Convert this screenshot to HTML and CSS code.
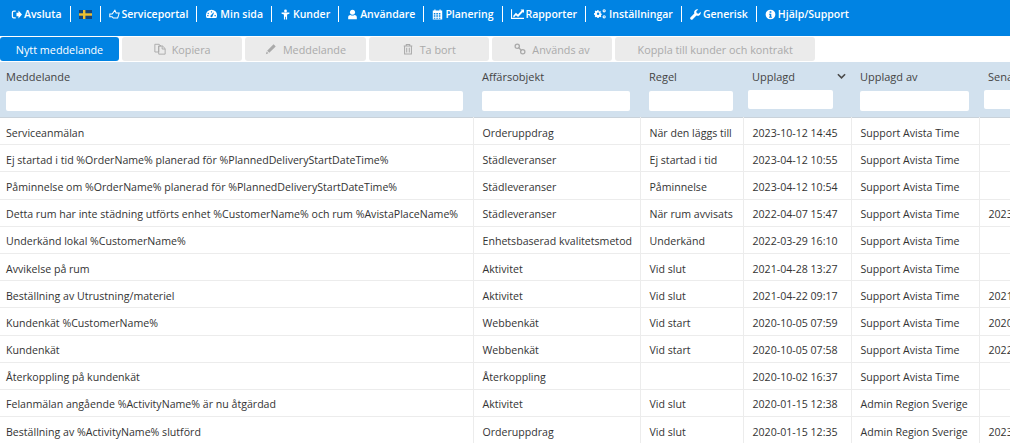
FILE: index.html
```html
<!DOCTYPE html>
<html lang="sv">

<head>
  <meta charset="UTF-8">
  <title>Meddelanden</title>
  <link rel="stylesheet" href="styles.css">
</head>

<body>

  <nav class="topnav">
    <a class="nav-item">
      <svg class="nav-icon" viewBox="0 0 14 14"><path d="M1 4.500A2.500 2.500 0 0 1 3.500 2H6v1.600H3.500a.9.900 0 0 0-.9.900v5c0 .5.400.9.900.9H6V12H3.500A2.500 2.500 0 0 1 1 9.500z"/><path d="M7 4.800h2.500V2L14 7l-4.500 5V9.200H7z"/></svg>
      Avsluta
    </a>
    <a class="nav-item">
      <svg class="flag" viewBox="0 0 13 9"><rect width="13" height="9" fill="#16457c"/><rect x="4" width="2.400" height="9" fill="#f0bf30"/><rect y="3.300" width="13" height="2.400" fill="#f0bf30"/></svg>
    </a>
    <a class="nav-item">
      <svg class="nav-icon" viewBox="0 0 14 14"><path d="M7.500 1.500 9 5h4l-1 3.500-1 3H5.500L4 10H1V6.500h3z" fill="none" stroke="#fff" stroke-width="1.300"/></svg>
      Serviceportal
    </a>
    <a class="nav-item">
      <svg class="nav-icon wide" viewBox="0 0 14 14"><path d="M7 2a6.500 6.500 0 0 0-6.500 6.500c0 1.200.3 2.300.9 3.300h11.200c.6-1 .9-2.100.9-3.300A6.500 6.500 0 0 0 7 2zM6.300 3.800h1.400v1.500H6.300zM3 5.300l1.200 1-1 1-1-1.100zM2 8.300h1.500v1.400H2zm8.500 0H12v1.400h-1.500zM7 10.800a1.300 1.300 0 0 1-.7-2.400l3-3.200.6.300-1.700 4A1.300 1.300 0 0 1 7 10.800z" fill-rule="evenodd"/></svg>
      Min sida
    </a>
    <a class="nav-item">
      <svg class="nav-icon" viewBox="0 0 14 14"><circle cx="7" cy="2.500" r="1.800"/><path d="M2 4.500h10v1.400L9 7v6.500H7.500V10h-1v3.500H5V7L2 5.900z"/></svg>
      Kunder
    </a>
    <a class="nav-item">
      <svg class="nav-icon" viewBox="0 0 14 14"><circle cx="7" cy="4.200" r="3.200"/><path d="M1.500 13v-2.500C1.500 8.500 3 7.500 4.500 7.500c.7.500 1.500.8 2.500.8s1.800-.3 2.500-.8c1.500 0 3 1 3 3V13z"/></svg>
      Användare
    </a>
    <a class="nav-item">
      <svg class="nav-icon" viewBox="0 0 14 14"><path d="M3 .5h1.500V2h5V.5H11V2h2v11.500H1V2h2zM2.300 5v2h2V5zm3.200 0v2h2V5zm3.200 0v2h2V5zM2.300 8v2h2V8zm3.200 0v2h2V8zm3.200 0v2h2V8zm-6.400 3v1.300h2V11zm3.200 0v1.300h2V11zm3.200 0v1.300h2V11z" fill-rule="evenodd"/></svg>
      Planering
    </a>
    <a class="nav-item">
      <svg class="nav-icon wide" viewBox="0 0 16 14"><path d="M0 1h1.300v10.700H16V13H0z"/><path d="M2.500 9.500 6 5.500l2.500 2L13 2.800l-1.300-1.300H16v4.200l-1.300-1.300-6 6.200L6 8.500l-2.500 2.800z"/></svg>
      Rapporter
    </a>
    <a class="nav-item">
      <svg class="nav-icon wide" viewBox="0 0 16 14"><path d="M5.500 3.500l1 .4 1-.6 1 1-.5 1 .4 1 1.100.3v1.500L8.900 8l-.4 1 .5 1-1 1-1-.5-1 .4-.3 1.100H4.200L3.900 11l-1-.4-1 .5-1-1 .5-1-.4-1L0 7.600V6.100L1 5.800l.4-1-.5-1 1-1 1 .5 1-.4L4.200 2h1.500zM5 5.300a1.500 1.500 0 1 0 0 3 1.500 1.500 0 0 0 0-3z" fill-rule="evenodd"/><path d="M12.500 1a2 2 0 1 1 0 4 2 2 0 0 1 0-4zm0 1.300a.7.700 0 1 0 0 1.400.7.700 0 0 0 0-1.400zM12.500 8.500a2 2 0 1 1 0 4 2 2 0 0 1 0-4zm0 1.300a.7.700 0 1 0 0 1.400.7.700 0 0 0 0-1.400z" fill-rule="evenodd"/></svg>
      Inställningar
    </a>
    <a class="nav-item">
      <svg class="nav-icon" viewBox="0 0 14 14"><path d="M13.500 3.500 11 6 8.500 5.500 8 3 10.500.6a4 4 0 0 0-5 5.100L.8 10.400a1.900 1.900 0 0 0 2.700 2.700l4.700-4.700a4 4 0 0 0 5.300-4.900z"/></svg>
      Generisk
    </a>
    <a class="nav-item">
      <svg class="nav-icon" viewBox="0 0 14 14"><path d="M7 .8a6.200 6.200 0 1 1 0 12.400A6.200 6.200 0 0 1 7 .8zM5.900 2.900v1.800h2.200V2.900zM5.200 6v1.300h.8v2.500h-.8V11h3.600V9.800H8V6z" fill-rule="evenodd"/></svg>
      Hjälp/Support
    </a>
  </nav>

  <div class="toolbar">
    <button class="btn btn-primary">Nytt meddelande</button>
    <button class="btn">
      <svg class="btn-icon" viewBox="0 0 14 14"><path d="M1 1.500h5l2 2H5.500v7H1zM5.500 3.500H10l3 3v6.500H5.500zM9.500 3.500v3.500H13" fill="none" stroke="#aaa" stroke-width="1.100"/></svg>
      Kopiera
    </button>
    <button class="btn">
      <svg class="btn-icon" viewBox="0 0 14 14"><path d="M10 1.500l2.500 2.500L5 11.500 2.500 9zM2 10l2 2-3 1z" fill="#aaa"/></svg>
      Meddelande
    </button>
    <button class="btn">
      <svg class="btn-icon" viewBox="0 0 14 14"><path d="M2 3.500h10M5 3.500V1.800h4v1.700M3 3.500v9.300h8V3.500M5.500 5.500v5.500M8.500 5.500v5.500" fill="none" stroke="#aaa" stroke-width="1.200"/></svg>
      Ta bort
    </button>
    <button class="btn">
      <svg class="btn-icon" viewBox="0 0 14 14"><path d="M5 5l4 4" stroke="#aaa" stroke-width="1.500"/><circle cx="3.800" cy="3.800" r="2.500" fill="none" stroke="#aaa" stroke-width="1.500"/><circle cx="10.200" cy="10.200" r="2.500" fill="none" stroke="#aaa" stroke-width="1.500"/></svg>
      Används av
    </button>
    <button class="btn btn-wide">Koppla till kunder och kontrakt</button>
  </div>

  <table class="grid">
    <colgroup>
      <col class="col-message">
      <col class="col-object">
      <col class="col-rule">
      <col class="col-created">
      <col class="col-author">
      <col>
    </colgroup>
    <thead>
      <tr>
        <th><div class="th-title">Meddelande</div><input class="filter filter-message"></th>
        <th><div class="th-title">Affärsobjekt</div><input class="filter filter-object"></th>
        <th><div class="th-title">Regel</div><input class="filter filter-rule"></th>
        <th>
          <div class="th-title">Upplagd
            <svg class="sort-icon" viewBox="0 0 10 6"><path d="M1 1l4 4 4-4" fill="none" stroke="#4a4a4a" stroke-width="1.800"/></svg>
          </div>
          <input class="filter filter-created">
        </th>
        <th><div class="th-title">Upplagd av</div><input class="filter filter-author"></th>
        <th class="th-last"><div class="th-title">Senast</div><input class="filter filter-last"></th>
      </tr>
    </thead>
    <tbody>
      <tr><td>Serviceanmälan</td><td>Orderuppdrag</td><td>När den läggs till</td><td>2023-10-12 14:45</td><td>Support Avista Time</td><td></td></tr>
      <tr><td>Ej startad i tid %OrderName% planerad för %PlannedDeliveryStartDateTime%</td><td>Städleveranser</td><td>Ej startad i tid</td><td>2023-04-12 10:55</td><td>Support Avista Time</td><td></td></tr>
      <tr><td>Påminnelse om %OrderName% planerad för %PlannedDeliveryStartDateTime%</td><td>Städleveranser</td><td>Påminnelse</td><td>2023-04-12 10:54</td><td>Support Avista Time</td><td></td></tr>
      <tr><td>Detta rum har inte städning utförts enhet %CustomerName% och rum %AvistaPlaceName%</td><td>Städleveranser</td><td>När rum avvisats</td><td>2022-04-07 15:47</td><td>Support Avista Time</td><td>2023-01-01</td></tr>
      <tr><td>Underkänd lokal %CustomerName%</td><td>Enhetsbaserad kvalitetsmetod</td><td>Underkänd</td><td>2022-03-29 16:10</td><td>Support Avista Time</td><td></td></tr>
      <tr><td>Avvikelse på rum</td><td>Aktivitet</td><td>Vid slut</td><td>2021-04-28 13:27</td><td>Support Avista Time</td><td></td></tr>
      <tr><td>Beställning av Utrustning/materiel</td><td>Aktivitet</td><td>Vid slut</td><td>2021-04-22 09:17</td><td>Support Avista Time</td><td>2021-01-01</td></tr>
      <tr><td>Kundenkät %CustomerName%</td><td>Webbenkät</td><td>Vid start</td><td>2020-10-05 07:59</td><td>Support Avista Time</td><td>2020-01-01</td></tr>
      <tr><td>Kundenkät</td><td>Webbenkät</td><td>Vid start</td><td>2020-10-05 07:58</td><td>Support Avista Time</td><td>2022-01-01</td></tr>
      <tr><td>Återkoppling på kundenkät</td><td>Återkoppling</td><td></td><td>2020-10-02 16:37</td><td>Support Avista Time</td><td></td></tr>
      <tr><td>Felanmälan angående %ActivityName% är nu åtgärdad</td><td>Aktivitet</td><td>Vid slut</td><td>2020-01-15 12:38</td><td>Admin Region Sverige</td><td></td></tr>
      <tr><td>Beställning av %ActivityName% slutförd</td><td>Orderuppdrag</td><td>Vid slut</td><td>2020-01-15 12:35</td><td>Admin Region Sverige</td><td>2023-01-01</td></tr>
    </tbody>
  </table>

</body>

</html>
```

FILE: styles.css
```css
html, body {
  height: 100%;
  overflow: hidden;
}

body {
  margin: 0;
  font-family: "Open Sans", "Noto Sans", sans-serif;
  font-size: 10.6px;
  color: #333;
  background-color: #fff;
}

.topnav {
  display: flex;
  align-items: flex-start;
  box-sizing: border-box;
  height: 36px;
  padding: 6px 0 0 11px;
  background-color: #0083e3;
}

.nav-item {
  display: flex;
  align-items: center;
  gap: 2px;
  height: 16px;
  padding-right: 8px;
  margin-right: 8px;
  border-right: 1px solid #fff;
  color: #fff;
  font-size: 10.5px;
  font-weight: 600;
  white-space: nowrap;
}

.nav-item:last-child {
  border-right: 0;
}

.nav-icon {
  width: 11px;
  height: 11px;
  fill: #fff;
}

.nav-icon.wide {
  width: 13px;
  height: 12px;
}

.flag {
  width: 13px;
  height: 9px;
}

.toolbar {
  display: flex;
  gap: 3px;
  height: 24px;
  margin-top: 1px;
  margin-bottom: 1px;
}

.btn {
  display: flex;
  align-items: center;
  justify-content: center;
  gap: 6px;
  width: 120.3px;
  height: 24px;
  padding: 0;
  border: 0;
  border-radius: 3px;
  background-color: #ebebeb;
  color: #aaa;
  font-family: inherit;
  font-size: 10.8px;
}

.btn-primary {
  width: 119px;
  background-color: #0083e3;
  color: #fff;
}

.btn-wide {
  width: 200px;
}

.btn-icon {
  width: 12px;
  height: 12px;
}

.grid {
  width: 1010px;
  table-layout: fixed;
  border-collapse: collapse;
}

.col-message { width: 473px; }
.col-object { width: 167px; }
.col-rule { width: 103px; }
.col-created { width: 108px; }
.col-author { width: 128px; }

.grid thead tr {
  background-color: #d2e1ee;
  border-bottom: 1px solid #c9d2da;
}

.grid th {
  height: 55px;
  padding: 0;
  vertical-align: top;
  text-align: left;
  font-weight: 500;
  font-size: 11px;
  color: #444;
}

.th-title {
  display: flex;
  align-items: center;
  justify-content: space-between;
  box-sizing: border-box;
  height: 16px;
  margin-top: 6px;
  padding: 0 5px 0 9px;
}

.grid th:first-child .th-title {
  padding-left: 6px;
}

.sort-icon {
  width: 9px;
  height: 6px;
}

.filter {
  display: block;
  box-sizing: border-box;
  height: 20px;
  margin: 7px 0 0 9px;
  padding: 0;
  border: 0;
  border-radius: 2px;
  background-color: #fff;
}

.filter-message { width: 457px; margin-left: 6px; }
.filter-object { width: 148px; }
.filter-rule { width: 84px; }
.filter-created { width: 85px; height: 19px; margin: 6px 0 0 5px; }
.filter-author { width: 109px; }
.filter-last { width: 60px; height: 19px; margin: 6px 0 0 5px; }

.grid td {
  box-sizing: border-box;
  height: 27.2px;
  padding: 3px 0 0 9px;
  border-right: 1px solid #ececec;
  border-bottom: 1px solid #ececec;
  white-space: nowrap;
  overflow: hidden;
}

.grid td:first-child {
  padding-left: 6px;
}

.grid td:last-child {
  border-right: 0;
}
```
